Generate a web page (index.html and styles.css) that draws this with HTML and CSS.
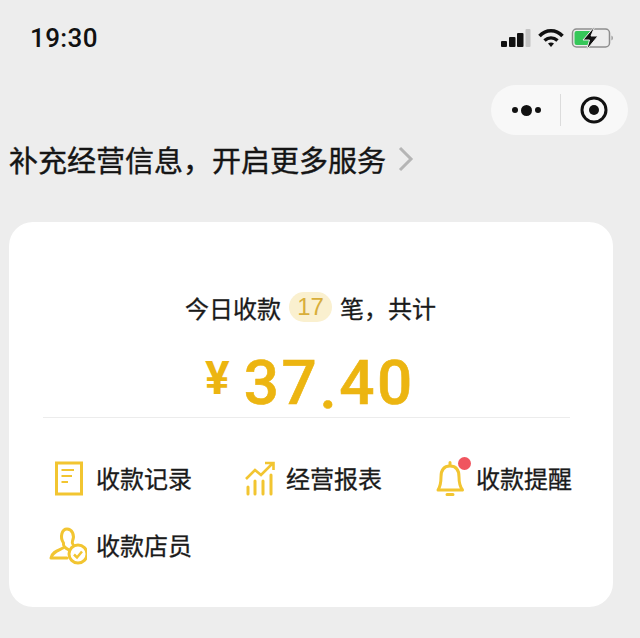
FILE: index.html
```html
<!DOCTYPE html>
<html lang="zh-CN">

<head>
    <meta charset="UTF-8">
    <meta name="viewport" content="width=device-width, initial-scale=1.0">
    <title>收款</title>
    <link rel="stylesheet" href="styles.css">
</head>

<body>
    <!-- STATUS BAR -->
    <div class="status-bar">
        <span class="time">19:30</span>
        <div class="status-icons">
            <svg width="30" height="20" viewBox="0 0 30 20">
                <rect x="0" y="13" width="6" height="6" rx="1" fill="#111"/>
                <rect x="8" y="9" width="6.500" height="10" rx="1" fill="#111"/>
                <rect x="16" y="5" width="6.500" height="14" rx="1" fill="#111"/>
                <rect x="24.500" y="1" width="5" height="18" rx="1" fill="#c4c4c4"/>
            </svg>
            <svg width="26" height="20" viewBox="0 0 26 20">
                <path d="M1.500 8C8 1 18 1 24.500 8" fill="none" stroke="#111" stroke-width="3.500"/>
                <path d="M6.500 12.500C10.500 9 15.500 9 19.500 12.500" fill="none" stroke="#111" stroke-width="3.500"/>
                <path d="M10 15.500C11.800 14 14.200 14 16 15.500L13 19Z" fill="#111"/>
            </svg>
            <svg width="43" height="24" viewBox="0 0 43 24">
                <rect x="1.500" y="3" width="37" height="18" rx="4" fill="none" stroke="#8e8e8e" stroke-width="1.500"/>
                <path d="M3.500 7a2 2 0 0 1 2-2H20V19H5.500a2 2 0 0 1-2-2Z" fill="#35c759"/>
                <path d="M40.500 9.500a3 3 0 0 1 0 5Z" fill="#8e8e8e"/>
                <path d="M24 0 12 14h6.500l-3 10L27 10h-7l4-10Z" fill="#111" stroke="#eee" stroke-width="1"/>
            </svg>
        </div>
    </div>

    <!-- CAPSULE -->
    <div class="capsule-row">
        <div class="capsule">
            <div class="capsule-more">
                <i class="dot"></i><i class="dot dot-big"></i><i class="dot"></i>
            </div>
            <div class="capsule-line"></div>
            <svg class="capsule-close" width="30" height="30" viewBox="0 0 30 30">
                <circle cx="15" cy="15" r="12" fill="none" stroke="#111" stroke-width="3"/>
                <circle cx="15" cy="15" r="5" fill="#111"/>
            </svg>
        </div>
    </div>

    <!-- BANNER -->
    <div class="banner">
        <span>补充经营信息，开启更多服务</span>
        <svg width="16" height="26" viewBox="0 0 16 26">
            <path d="M2 2 13 13 2 24" fill="none" stroke="#b5b5b5" stroke-width="3"/>
        </svg>
    </div>

    <!-- CARD -->
    <div class="card">
        <div class="today">
            今日收款<span class="today-count">17</span>笔，共计
        </div>
        <div class="amount">
            <span class="amount-unit">¥</span><span class="amount-num">37<span class="amount-dot">.</span>40</span>
        </div>

        <div class="menu">
            <div class="menu-item">
                <svg class="menu-icon" width="40" height="40" viewBox="0 0 40 40">
                    <rect x="9.500" y="5" width="25" height="31" fill="none" stroke="#f2c531" stroke-width="3"/>
                    <path d="M14.500 12H27M14.500 18H25M14.500 24H21" fill="none" stroke="#f2c531" stroke-width="2.200"/>
                </svg>
                <span>收款记录</span>
            </div>
            <div class="menu-item">
                <svg class="menu-icon" width="40" height="40" viewBox="0 0 40 40">
                    <path d="M9 21 18 12 24 17 36 5M28 5H36.500V12" fill="none" stroke="#f2c531" stroke-width="2.600"/>
                    <path d="M11 36V29M18 36V23M26 36V23M34 36V17" fill="none" stroke="#f2c531" stroke-width="3" stroke-linecap="round"/>
                </svg>
                <span>经营报表</span>
            </div>
            <div class="menu-item">
                <span class="bell">
                    <svg class="menu-icon" width="40" height="40" viewBox="0 0 40 40">
                        <path d="M11 32C13.500 28 14 24 14 19C14 12 17 8 23 8S32 12 32 19C32 24 32.500 28 35.500 32Z" fill="none" stroke="#f2c531" stroke-width="3" stroke-linejoin="round"/>
                        <path d="M23 4.500V7.500M20 36.500H26" fill="none" stroke="#f2c531" stroke-width="3" stroke-linecap="round"/>
                    </svg>
                    <i class="bell-dot"></i>
                </span>
                <span>收款提醒</span>
            </div>
            <div class="menu-item">
                <svg class="menu-icon" width="40" height="40" viewBox="0 0 40 40">
                    <path d="M22 25C17.500 22.500 16 21 16.500 18C12.500 12 15 4 20 4S28 10 25.500 16C25 17.500 25 18.500 26 19.500M16 23C11 25.500 5 27 4 33H20" fill="none" stroke="#f2c531" stroke-width="3" stroke-linecap="round" stroke-linejoin="round"/>
                    <circle cx="31" cy="29" r="9" fill="none" stroke="#f2c531" stroke-width="3"/>
                    <path d="M27 29.500 30 32.500 35 26.500" fill="none" stroke="#f2c531" stroke-width="2.500"/>
                </svg>
                <span>收款店员</span>
            </div>
        </div>
    </div>
</body>

</html>
```

FILE: styles.css
```css
/* RESET */
* {
    margin: 0;
    padding: 0;
    box-sizing: border-box;
    font-family: "Liberation Sans", "Noto Sans CJK SC", sans-serif;
}

body {
    background-color: #ededed;
    color: #1a1a1a;
    overflow: hidden;
}

/* STATUS BAR */
.status-bar {
    display: flex;
    align-items: center;
    justify-content: space-between;
    height: 76px;
    padding: 0 26px 0 30px;
}

.time {
    font-family: Roboto, sans-serif;
    font-size: 26px;
    font-weight: 500;
    letter-spacing: .4px;
    color: #111;
}

.status-icons {
    display: flex;
    align-items: center;
    gap: 7px;
}

/* CAPSULE */
.capsule-row {
    display: flex;
    justify-content: flex-end;
    padding-right: 12px;
    margin-top: 9px;
}

.capsule {
    display: flex;
    align-items: center;
    width: 137px;
    height: 50px;
    padding-left: 21px;
    border-radius: 25px;
    background-color: #f8f8f8;
}

.capsule-more {
    display: flex;
    align-items: center;
    gap: 3px;
    width: 48px;
}

.dot {
    width: 6px;
    height: 6px;
    border-radius: 50%;
    background-color: #111;
}

.dot-big {
    width: 11px;
    height: 11px;
}

.capsule-line {
    width: 1px;
    height: 32px;
    background-color: #dcdcdc;
}

.capsule-close {
    margin-left: 18px;
}

/* BANNER */
.banner {
    display: flex;
    align-items: center;
    gap: 12px;
    height: 47px;
    padding-left: 9px;
    font-size: 29px;
    -webkit-text-stroke: .4px #151515;
    color: #151515;
}

/* CARD */
.card {
    width: 604px;
    height: 385px;
    margin: 40px 0 0 9px;
    padding-top: 69px;
    border-radius: 24px;
    background-color: #fff;
}

.today {
    display: flex;
    align-items: center;
    justify-content: center;
    height: 32px;
    padding-right: 1px;
    font-size: 24px;
    -webkit-text-stroke: .3px #1a1a1a;
}

.today-count {
    width: 43px;
    height: 30px;
    margin: 0 8px;
    border-radius: 15px;
    background-color: #faf0cf;
    color: #d8ae3a;
    -webkit-text-stroke: 0;
    font-size: 24px;
    line-height: 30px;
    text-align: center;
}

.amount {
    display: flex;
    align-items: baseline;
    justify-content: center;
    height: 75px;
    margin: 20px 43px 0 34px;
    padding-left: 7px;
    border-bottom: 1px solid #ececec;
    color: #ecb511;
    font-family: Roboto, sans-serif;
    line-height: 79px;
}

.amount-unit {
    margin-right: 14px;
    font-family: Roboto, sans-serif;
    font-size: 46px;
    font-weight: 700;
    position: relative;
    top: -10px;
}

.amount-num {
    font-family: Roboto, sans-serif;
    font-size: 62px;
    font-weight: 500;
    letter-spacing: 2.600px;
    -webkit-text-stroke: .6px #ecb511;
}

.amount-dot {
    font-family: Roboto, sans-serif;
    vertical-align: -4px;
}

/* MENU */
.menu {
    display: grid;
    grid-template-columns: repeat(3, 190px);
    grid-auto-rows: 67px;
    margin-top: 26px;
    padding-left: 38px;
}

.menu-item {
    display: flex;
    align-items: center;
    gap: 9px;
    font-size: 24px;
    -webkit-text-stroke: .3px #1a1a1a;
}

.menu-icon {
    display: block;
}

.bell {
    position: relative;
    display: block;
    width: 40px;
    height: 40px;
}

.bell-dot {
    position: absolute;
    top: -1px;
    right: -4px;
    width: 13px;
    height: 13px;
    border-radius: 50%;
    background-color: #f0555f;
}
```
